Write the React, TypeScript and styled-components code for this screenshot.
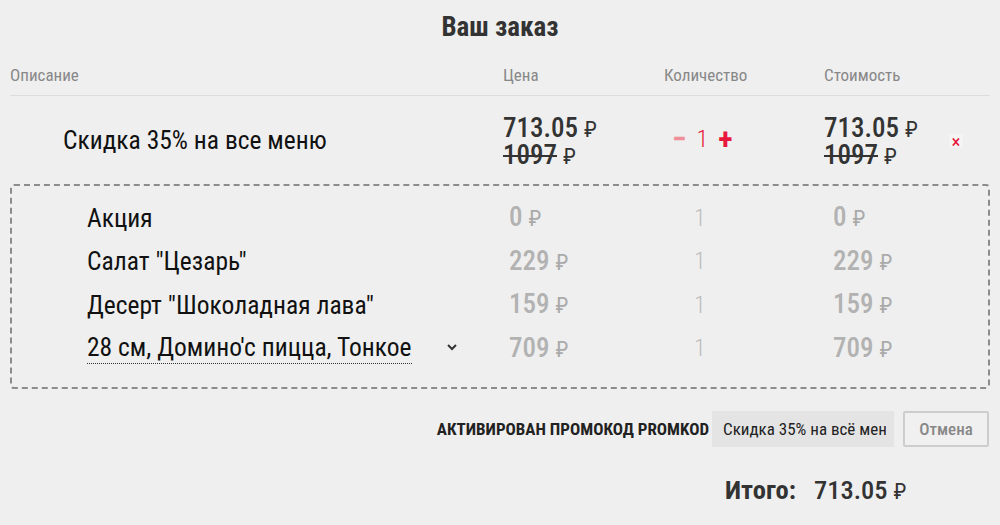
import React from "react";
import styled, { createGlobalStyle } from "styled-components";

const Global = createGlobalStyle`
  html, body { margin: 0; padding: 0; background: #efefef; }
  body { font-family: "Roboto Condensed", Roboto, "Noto Sans", sans-serif; font-stretch: condensed; color: #222; }
  * { box-sizing: border-box; }
`;

const Page = styled.div`
  width: 1000px;
  height: 525px;
  padding: 0 10px;
  overflow: hidden;
`;

const Title = styled.h1`
  margin: 0;
  height: 54px;
  display: flex;
  align-items: center;
  justify-content: center;
  font-size: 27px;
  font-weight: 700;
  color: #333;
`;

const Cols = styled.div<{ $sub?: boolean }>`
  display: grid;
  grid-template-columns: ${(p) => (p.$sub ? "497px 161px 163px 1fr" : "493px 161px 160px 1fr 50px")};
  align-items: center;
`;

const HeadRow = styled(Cols)`
  height: 42px;
  border-bottom: 1px solid #dcdcdc;
  font-size: 17px;
  color: #888;
`;

const MainRow = styled(Cols)`
  height: 88px;
`;

const Desc = styled.div<{ $indent: number }>`
  padding-left: ${(p) => p.$indent}px;
  font-size: 25.5px;
  color: #111;
  display: flex;
  align-items: center;
  white-space: nowrap;
`;

const PriceStack = styled.div<{ $offset?: number }>`
  display: flex;
  flex-direction: column;
  margin-top: ${(p) => p.$offset ?? 0}px;
`;

const PriceLine = styled.div`
  display: flex;
  align-items: baseline;
  height: 27px;
  line-height: 27px;
`;

const Amount = styled.span<{ $muted?: boolean; $strike?: boolean }>`
  font-size: 27px;
  font-weight: 500;
  color: ${(p) => (p.$muted ? "#b2b2b2" : "#333")};
  text-decoration: ${(p) => (p.$strike ? "line-through" : "none")};
  text-decoration-thickness: 2px;
`;

const Rub = styled.span<{ $muted?: boolean }>`
  font-size: 22px;
  font-weight: 400;
  color: ${(p) => (p.$muted ? "#aaa" : "#333")};
  margin-left: 6px;
`;

const Qty = styled.div`
  display: flex;
  align-items: center;
  padding-left: 8px;
  gap: 10px;
  color: #e8173c;
  font-size: 24px;
  font-weight: 300;
  margin-top: -2px;
`;

const QtyBtn = styled.span<{ $dim?: boolean }>`
  font-size: 30px;
  font-weight: 700;
  color: ${(p) => (p.$dim ? "#ef8f99" : "#e8173c")};
  line-height: 1;
`;

const Remove = styled.span`
  width: 14px;
  height: 14px;
  display: flex;
  align-items: center;
  justify-content: center;
  color: #e8173c;
  font-size: 19px;
  line-height: 1;
  background: #f4f4f4;
  margin-left: 9px;
  margin-top: 2px;
`;

const Group = styled.div`
  border: 2px dashed #8c8c8c;
  border-radius: 4px;
  padding: 10px 0 16px;
  height: 205px;
`;

const SubRow = styled(Cols)`
  height: 43.5px;
`;

const SubQty = styled.div`
  padding-left: 24px;
  font-size: 24px;
  font-weight: 300;
  color: #bdbdbd;
`;

const Dotted = styled.span`
  border-bottom: 1px dotted #333;
  padding-bottom: 1px;
`;

const Chevron = styled.svg`
  margin-left: 34px;
  margin-top: -2px;
`;

const PromoRow = styled.div`
  display: flex;
  justify-content: flex-end;
  align-items: center;
  margin-top: 22px;
  padding-right: 1px;
  height: 36px;
`;

const PromoLabel = styled.span`
  font-size: 17px;
  font-weight: 700;
  color: #222;
  margin-right: 3px;
  white-space: nowrap;
`;

const PromoInput = styled.input`
  width: 182px;
  height: 36px;
  background: #e4e4e4;
  border: none;
  outline: none;
  font-family: inherit;
  font-stretch: condensed;
  font-size: 17px;
  color: #222;
  padding: 0 8px 0 11px;
`;

const CancelBtn = styled.button`
  width: 86px;
  height: 36px;
  margin-left: 9px;
  border: 2px solid #cdcdcd;
  border-radius: 2px;
  background: #f0f0f0;
  font-family: inherit;
  font-stretch: condensed;
  font-size: 17px;
  font-weight: 500;
  color: #888;
`;

const TotalRow = styled.div`
  display: flex;
  align-items: baseline;
  padding-left: 715px;
  margin-top: 27px;
  font-size: 26.5px;
  font-weight: 700;
  color: #333;
`;

const TotalValue = styled.span`
  margin-left: 18px;
  font-weight: 500;
`;

function Price({ value, old, muted, offset }: { value: string; old?: string; muted?: boolean; offset?: number }) {
  return (
    <PriceStack $offset={offset}>
      <PriceLine>
        <Amount $muted={muted}>{value}</Amount>
        <Rub $muted={muted}>₽</Rub>
      </PriceLine>
      {old && (
        <PriceLine>
          <Amount $strike>{old}</Amount>
          <Rub>₽</Rub>
        </PriceLine>
      )}
    </PriceStack>
  );
}

const items = [
  { name: "Акция", price: "0" },
  { name: 'Салат "Цезарь"', price: "229" },
  { name: 'Десерт "Шоколадная лава"', price: "159" },
  { name: "28 см, Домино'с пицца, Тонкое", price: "709", expandable: true },
];

export default function App() {
  return (
    <Page>
      <Global />
      <Title>Ваш заказ</Title>
      <HeadRow>
        <div>Описание</div>
        <div>Цена</div>
        <div>Количество</div>
        <div>Стоимость</div>
        <div />
      </HeadRow>
      <MainRow>
        <Desc $indent={53}>Скидка 35% на все меню</Desc>
        <Price value="713.05" old="1097" offset={4} />
        <Qty>
          <QtyBtn $dim>−</QtyBtn>
          <span>1</span>
          <QtyBtn>+</QtyBtn>
        </Qty>
        <Price value="713.05" old="1097" offset={4} />
        <Remove>×</Remove>
      </MainRow>
      <Group>
        {items.map((it) => (
          <SubRow $sub key={it.name}>
            <Desc $indent={75}>
              {it.expandable ? <Dotted>{it.name}</Dotted> : it.name}
              {it.expandable && (
                <Chevron width="12" height="8" viewBox="0 0 12 8">
                  <path d="M2 2l4 4 4-4" fill="none" stroke="#333" strokeWidth="2" />
                </Chevron>
              )}
            </Desc>
            <Price value={it.price} muted />
            <SubQty>1</SubQty>
            <Price value={it.price} muted />
          </SubRow>
        ))}
      </Group>
      <PromoRow>
        <PromoLabel>АКТИВИРОВАН ПРОМОКОД PROMKOD</PromoLabel>
        <PromoInput readOnly value="Скидка 35% на всё меню" />
        <CancelBtn>Отмена</CancelBtn>
      </PromoRow>
      <TotalRow>
        Итого:
        <TotalValue>
          713.05<Rub>₽</Rub>
        </TotalValue>
      </TotalRow>
    </Page>
  );
}
